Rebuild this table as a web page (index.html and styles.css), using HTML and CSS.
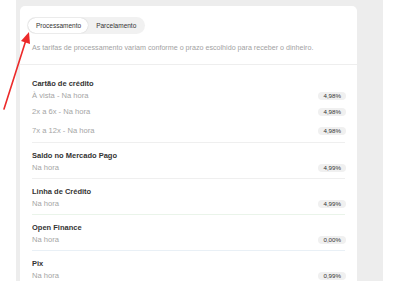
FILE: index.html
```html
<!DOCTYPE html>
<html lang="pt-BR">
<head>
<meta charset="utf-8">
<link rel="stylesheet" href="styles.css">
</head>
<body>
<div class="panel">
  <div class="card">
    <div class="tabs-row">
      <div class="tabs">
        <span class="tab active">Processamento</span>
        <span class="tab">Parcelamento</span>
      </div>
    </div>
    <p class="desc">As tarifas de processamento variam conforme o prazo escolhido para receber o dinheiro.</p>
    <div class="list">
      <div class="section first">
        <div class="title">Cartão de crédito</div>
        <div class="row"><span>À vista - Na hora</span><span class="badge">4,98%</span></div>
        <div class="row r2"><span>2x a 6x - Na hora</span><span class="badge">4,98%</span></div>
        <div class="row r3"><span>7x a 12x - Na hora</span><span class="badge">4,98%</span></div>
      </div>
      <div class="section">
        <div class="title">Saldo no Mercado Pago</div>
        <div class="row"><span>Na hora</span><span class="badge">4,99%</span></div>
      </div>
      <div class="section green">
        <div class="title">Linha de Crédito</div>
        <div class="row"><span>Na hora</span><span class="badge">4,99%</span></div>
      </div>
      <div class="section blue">
        <div class="title">Open Finance</div>
        <div class="row"><span>Na hora</span><span class="badge">0,00%</span></div>
      </div>
      <div class="section">
        <div class="title">Pix</div>
        <div class="row"><span>Na hora</span><span class="badge">0,99%</span></div>
      </div>
    </div>
  </div>
</div>
<svg class="arrow" width="40" height="120" viewBox="0 0 40 120">
  <line x1="4" y1="109" x2="26" y2="40" stroke="#ec2a2a" stroke-width="1.6" stroke-linecap="round"/>
  <polygon points="29,32 30,44 21,41" fill="#ec2a2a"/>
</svg>
</body>
</html>
```
FILE: styles.css
```css
html, body {
  margin: 0;
  padding: 0;
  background: #ffffff;
}
body {
  font-family: "Liberation Sans", Arial, sans-serif;
  width: 400px;
  height: 284px;
  overflow: hidden;
  position: relative;
}
.panel {
  margin-left: 16px;
  width: 367px;
  height: 281px;
  background: #ededed;
  padding: 6px 26px 0 4px;
  box-sizing: border-box;
  overflow: hidden;
}
.card {
  background: #ffffff;
  border-radius: 5px 5px 0 0;
  height: 300px;
  padding-top: 11px;
  box-sizing: border-box;
}
.tabs-row {
  padding-left: 7px;
  display: flex;
}
.tabs {
  display: flex;
  align-items: center;
  background: #f1f1f1;
  border-radius: 9px;
  padding: 1px 2px 1px 1px;
  height: 17px;
  box-sizing: border-box;
}
.tab {
  font-size: 6.5px;
  color: #333333;
  padding: 0 7px 0 8px;
  height: 15px;
  line-height: 15px;
  border-radius: 8px;
}
.tab.active {
  background: #ffffff;
  box-shadow: 0 0 1px rgba(0,0,0,0.25);
}
.desc {
  margin: 8px 0 0 0;
  padding: 0 12px 10px;
  font-size: 7.15px;
  line-height: 12px;
  color: #a2a2a2;
  white-space: nowrap;
  border-bottom: 1px solid #eeeeee;
}
.list {
  padding: 0 12px;
}
.section {
  padding: 7px 0 4px;
  border-bottom: 1px solid #efefef;
}
.section.first {
  padding-top: 13px;
  padding-bottom: 5px;
}
.section.green {
  border-bottom-color: #eaf4ea;
}
.section.blue {
  border-bottom-color: #e9f0f6;
}
.title {
  font-size: 7.5px;
  font-weight: 700;
  color: #333333;
  line-height: 12px;
}
.row {
  display: flex;
  justify-content: space-between;
  align-items: center;
  font-size: 7.6px;
  color: #a5a5a5;
  line-height: 12px;
  height: 12px;
}
.row.r2 { margin-top: 4px; }
.row.r3 { margin-top: 7px; }
.badge {
  font-size: 6.2px;
  color: #333333;
  background: #f0f0f0;
  border-radius: 4px;
  padding: 0 5px;
  height: 8px;
  line-height: 8px;
  margin-right: -1px;
}
.arrow {
  position: absolute;
  left: 0;
  top: 0;
}
```
